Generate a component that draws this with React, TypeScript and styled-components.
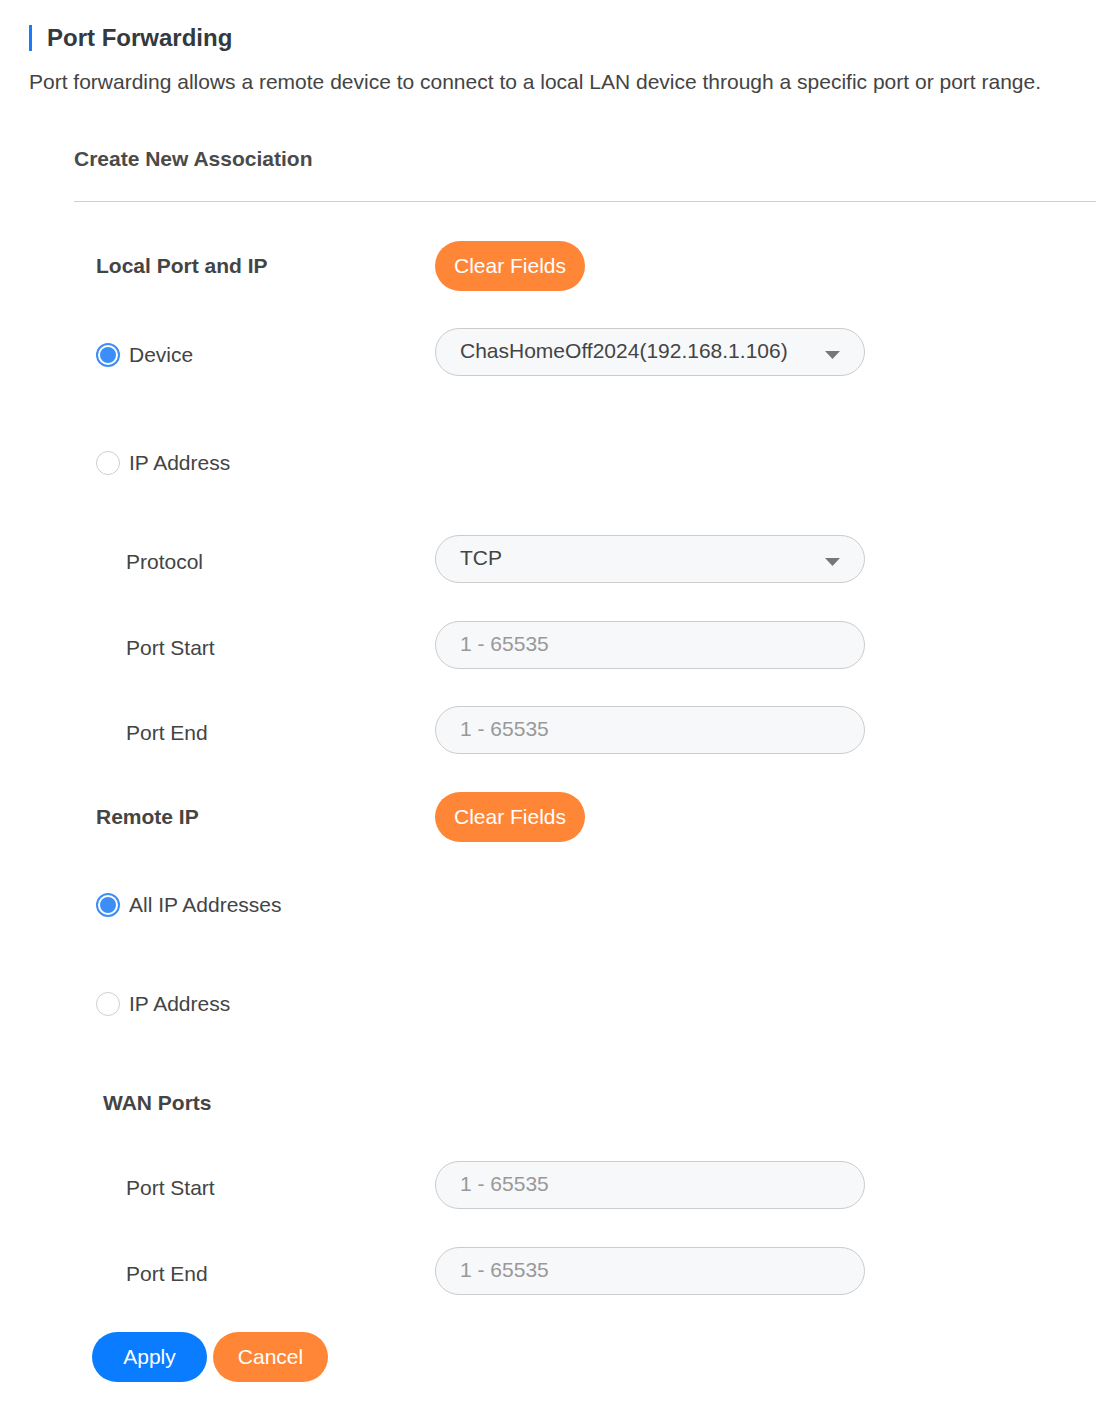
import React from 'react';
import styled, { createGlobalStyle } from 'styled-components';

const GlobalStyle = createGlobalStyle`
  body {
    margin: 0;
    background: #ffffff;
    font-family: 'Liberation Sans', Arial, sans-serif;
    color: #444444;
  }
`;

const Page = styled.div`
  padding: 25px 0 38px 29px;
`;

const TitleBar = styled.div`
  display: flex;
  align-items: center;
  gap: 15px;
  height: 26px;
`;

const Accent = styled.span`
  width: 3px;
  height: 26px;
  background: #1a7af8;
`;

const Title = styled.h1`
  margin: 0;
  font-size: 24px;
  font-weight: 700;
  color: #333a3f;
  line-height: 26px;
`;

const Description = styled.p`
  margin: 19px 0 0;
  font-size: 21px;
  line-height: 24px;
  color: #444444;
`;

const Section = styled.div`
  margin-left: 45px;
`;

const SectionTitle = styled.h2`
  margin: 53px 0 0;
  font-size: 21px;
  font-weight: 700;
  line-height: 24px;
  color: #4a4a4a;
`;

const Divider = styled.hr`
  margin: 30px 0 0;
  border: none;
  border-top: 1px solid #cfcfcf;
`;

const Form = styled.div`
  padding-left: 22px;
`;

const Row = styled.div<{ $top: number }>`
  display: flex;
  align-items: center;
  min-height: 48px;
  margin-top: ${p => p.$top}px;
`;

const LabelCell = styled.div<{ $indent?: number; $bold?: boolean; $drop?: boolean }>`
  width: ${p => 339 - (p.$indent || 0)}px;
  padding-left: ${p => p.$indent || 0}px;
  padding-top: ${p => (p.$drop ? 6 : 0)}px;
  font-size: 21px;
  line-height: 24px;
  font-weight: ${p => (p.$bold ? 700 : 400)};
  color: #444444;
`;

const RadioLabel = styled.label`
  display: flex;
  align-items: center;
  gap: 9px;
  font-size: 21px;
  line-height: 24px;
  color: #444444;
  cursor: pointer;
`;

const RadioCircle = styled.span<{ $checked?: boolean }>`
  box-sizing: border-box;
  width: 24px;
  height: 24px;
  border-radius: 50%;
  border: ${p => (p.$checked ? '2px solid #3b8ef7' : '1px solid #cfcfcf')};
  background: #ffffff;
  display: flex;
  align-items: center;
  justify-content: center;

  &::after {
    content: '';
    width: 16px;
    height: 16px;
    border-radius: 50%;
    background: ${p => (p.$checked ? '#3b8ef7' : 'transparent')};
  }
`;

const PillButton = styled.button<{ $variant: 'orange' | 'blue'; $width: number }>`
  height: 50px;
  width: ${p => p.$width}px;
  border: none;
  border-radius: 25px;
  background: ${p => (p.$variant === 'orange' ? '#ff8636' : '#0a7cff')};
  color: #ffffff;
  font-family: 'Liberation Sans', Arial, sans-serif;
  font-size: 21px;
  cursor: pointer;
  padding: 0;
`;

const Field = styled.div`
  box-sizing: border-box;
  width: 430px;
  height: 48px;
  border: 1px solid #cccccc;
  border-radius: 24px;
  background: #f7f8fa;
  display: flex;
  align-items: center;
  padding: 0 24px;
  font-size: 21px;
  color: #444444;
`;

const FieldText = styled.span<{ $placeholder?: boolean }>`
  flex: 1;
  color: ${p => (p.$placeholder ? '#999999' : '#444444')};
  padding-bottom: 2px;
`;

const Caret = styled.svg`
  width: 15px;
  height: 8px;
  margin-top: 6px;
`;

const ButtonBar = styled.div`
  display: flex;
  gap: 6px;
  margin-top: 37px;
  margin-left: -4px;
`;

const Select: React.FC<{ value: string }> = ({ value }) => (
  <Field>
    <FieldText>{value}</FieldText>
    <Caret viewBox="0 0 15 8">
      <path d="M0 0 H15 L7.5 8 Z" fill="#777777" />
    </Caret>
  </Field>
);

const Input: React.FC<{ placeholder: string }> = ({ placeholder }) => (
  <Field>
    <FieldText $placeholder>{placeholder}</FieldText>
  </Field>
);

const Radio: React.FC<{ label: string; checked?: boolean }> = ({ label, checked }) => (
  <RadioLabel>
    <RadioCircle $checked={checked} />
    {label}
  </RadioLabel>
);

export default function App() {
  return (
    <>
      <GlobalStyle />
      <Page>
        <TitleBar>
          <Accent />
          <Title>Port Forwarding</Title>
        </TitleBar>
        <Description>
          Port forwarding allows a remote device to connect to a local LAN device through a specific port or port range.
        </Description>

        <Section>
          <SectionTitle>Create New Association</SectionTitle>
          <Divider />

          <Form>
            <Row $top={39}>
              <LabelCell $bold>Local Port and IP</LabelCell>
              <PillButton $variant="orange" $width={150}>Clear Fields</PillButton>
            </Row>

            <Row $top={37}>
              <LabelCell $drop>
                <Radio label="Device" checked />
              </LabelCell>
              <Select value="ChasHomeOff2024(192.168.1.106)" />
            </Row>

            <Row $top={63}>
              <LabelCell>
                <Radio label="IP Address" />
              </LabelCell>
            </Row>

            <Row $top={48}>
              <LabelCell $indent={30} $drop>Protocol</LabelCell>
              <Select value="TCP" />
            </Row>

            <Row $top={38}>
              <LabelCell $indent={30} $drop>Port Start</LabelCell>
              <Input placeholder="1 - 65535" />
            </Row>

            <Row $top={37}>
              <LabelCell $indent={30} $drop>Port End</LabelCell>
              <Input placeholder="1 - 65535" />
            </Row>

            <Row $top={38}>
              <LabelCell $bold>Remote IP</LabelCell>
              <PillButton $variant="orange" $width={150}>Clear Fields</PillButton>
            </Row>

            <Row $top={39}>
              <LabelCell>
                <Radio label="All IP Addresses" checked />
              </LabelCell>
            </Row>

            <Row $top={51}>
              <LabelCell>
                <Radio label="IP Address" />
              </LabelCell>
            </Row>

            <Row $top={51}>
              <LabelCell $indent={7} $bold>WAN Ports</LabelCell>
            </Row>

            <Row $top={34}>
              <LabelCell $indent={30} $drop>Port Start</LabelCell>
              <Input placeholder="1 - 65535" />
            </Row>

            <Row $top={38}>
              <LabelCell $indent={30} $drop>Port End</LabelCell>
              <Input placeholder="1 - 65535" />
            </Row>

            <ButtonBar>
              <PillButton $variant="blue" $width={115}>Apply</PillButton>
              <PillButton $variant="orange" $width={115}>Cancel</PillButton>
            </ButtonBar>
          </Form>
        </Section>
      </Page>
    </>
  );
}
